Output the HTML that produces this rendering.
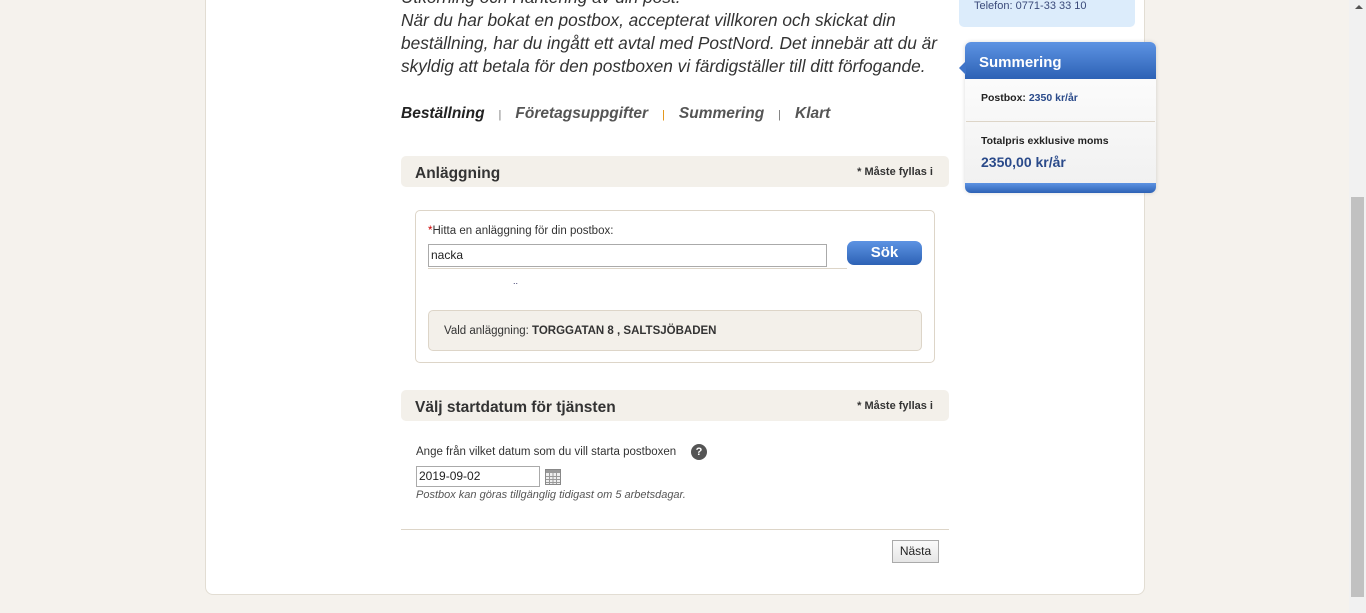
<!DOCTYPE html>
<html><head><meta charset="utf-8"><style>
*{box-sizing:border-box;margin:0;padding:0}
body{width:1366px;height:613px;overflow:hidden;background:#f5f2ed;font-family:"Liberation Sans",sans-serif;color:#333;position:relative}
.a{position:absolute}
.card{left:205px;top:-10px;width:940px;height:605px;background:#fff;border:1px solid #e2ddd3;border-radius:0 0 8px 8px}
.intro{left:401px;top:-14px;width:560px;font-style:italic;font-size:17.3px;line-height:23px;color:#333}
.tabs{left:401px;top:105px;font-style:italic;font-weight:bold;font-size:15.5px;color:#555;white-space:nowrap}
.tabs span.sep{font-style:normal;font-weight:normal;font-size:11px;color:#777;margin:0 14px}
.hdr{left:401px;width:548px;height:31px;background:#f3f0ea;border-radius:5px}
.hdr b{position:absolute;left:14px;top:9px;font-size:15.5px;color:#333}
.hdr i{position:absolute;right:16px;top:10px;font-size:11px;font-style:normal;font-weight:bold;color:#333}
.box{left:415px;top:210px;width:520px;height:153px;border:1px solid #ddd5c8;border-radius:5px}
.inp{border:1px solid #aaa;background:#fff;font-size:12px;padding-left:2px;color:#222}
.btn{left:847px;top:241px;width:75px;height:24px;border-radius:7px;background:linear-gradient(#5d93e3,#2d62b5);color:#fff;font-weight:bold;font-size:15px;text-align:center;line-height:23px}
.vald{left:428px;top:310px;width:494px;height:41px;background:#f3f0ea;border:1px solid #ddd5c8;border-radius:5px;font-size:11.5px;padding:14px 0 0 15px;color:#333}
.sm{font-size:11.5px}
</style></head><body>
<div class="a card"></div>
<div class="a intro">Utkörning och Hantering av din post.<br>När du har bokat en postbox, accepterat villkoren och skickat din beställning, har du ingått ett avtal med PostNord. Det innebär att du är skyldig att betala för den postboxen vi färdigställer till ditt förfogande.</div>
<div class="a tabs"><span style="color:#222">Beställning</span><span class="sep">|</span>Företagsuppgifter<span class="sep" style="color:#e08a00">|</span>Summering<span class="sep">|</span>Klart</div>

<div class="a hdr" style="top:156px"><b>Anläggning</b><i>* Måste fyllas i</i></div>
<div class="a box"></div>
<div class="a sm" style="left:428px;top:225px"><span style="color:#c00">*</span>Hitta en anläggning för din postbox:</div>
<div class="a inp" style="left:428px;top:244px;width:399px;height:23px;line-height:21px">nacka</div>
<div class="a" style="left:428px;top:268px;width:419px;height:1px;background:#ddd5c8"></div>
<div class="a" style="left:513px;top:276px;font-size:9px;color:#336">..</div>
<div class="a btn">Sök</div>
<div class="a vald">Vald anläggning: <b>TORGGATAN 8 , SALTSJÖBADEN</b></div>

<div class="a hdr" style="top:390px"><b>Välj startdatum för tjänsten</b><i>* Måste fyllas i</i></div>
<div class="a sm" style="left:416px;top:446px">Ange från vilket datum som du vill starta postboxen</div>
<div class="a" style="left:691px;top:444px;width:16px;height:16px;border-radius:50%;background:#555;color:#fff;font-size:11px;font-weight:bold;text-align:center;line-height:16px">?</div>
<div class="a inp" style="left:416px;top:466px;width:124px;height:21px;line-height:19px">2019-09-02</div>
<svg class="a" style="left:545px;top:469px" width="16" height="16" viewBox="0 0 16 16"><rect x="0.5" y="0.5" width="15" height="15" fill="#eee" stroke="#888"/><rect x="1" y="1" width="14" height="3" fill="#999"/><path d="M1 7.5h14M1 10.5h14M1 13.5h14M4.5 4v11M8 4v11M11.5 4v11" stroke="#999" stroke-width="1"/></svg>
<div class="a" style="left:416px;top:489px;font-size:11px;font-style:italic;color:#555">Postbox kan göras tillgänglig tidigast om 5 arbetsdagar.</div>
<div class="a" style="left:401px;top:529px;width:548px;height:1px;background:#ddd5c8"></div>
<div class="a" style="left:892px;top:540px;width:47px;height:23px;border:1px solid #aaa;background:linear-gradient(#fafafa,#e6e6e6);font-size:12px;text-align:center;line-height:21px;color:#222">Nästa</div>

<div class="a" style="left:959px;top:-6px;width:176px;height:33px;background:#dcecfb;border-radius:5px"></div>
<div class="a" style="left:974px;top:0px;font-size:11px;color:#3a4a7a">Telefon: 0771-33 33 10</div>

<div class="a" style="left:965px;top:42px;width:191px;height:151px;box-shadow:0 0 4px rgba(0,0,0,.15);border-radius:6px;background:linear-gradient(#fff,#f0f0f0)"></div>
<div class="a" style="left:965px;top:42px;width:191px;height:37px;border-radius:6px 6px 0 0;background:linear-gradient(#5d93e3,#2d62b5);color:#fff;font-weight:bold;font-size:15px;padding:12px 0 0 14px">Summering</div>
<div class="a" style="left:959px;top:61px;width:0;height:0;border-top:7px solid transparent;border-bottom:7px solid transparent;border-right:7px solid #3f74c8"></div>
<div class="a" style="left:981px;top:92px;font-size:10.5px;font-weight:bold;color:#222">Postbox: <span style="color:#2a4a8a">2350 kr/år</span></div>
<div class="a" style="left:966px;top:121px;width:189px;height:1px;background:#ddd5c8"></div>
<div class="a" style="left:981px;top:135px;font-size:10.5px;font-weight:bold;color:#222">Totalpris exklusive moms</div>
<div class="a" style="left:981px;top:154px;font-size:14px;font-weight:bold;color:#2a4a8a">2350,00 kr/år</div>
<div class="a" style="left:965px;top:183px;width:191px;height:10px;border-radius:0 0 6px 6px;background:linear-gradient(#5d93e3,#2d62b5)"></div>

<div class="a" style="left:1349px;top:0;width:17px;height:613px;background:#f1f1f1"></div>
<div class="a" style="left:1355px;top:5px;width:0;height:0;border-left:4px solid transparent;border-right:4px solid transparent;border-bottom:4px solid #555"></div>
<div class="a" style="left:1351px;top:197px;width:13px;height:400px;background:#c1c1c1"></div>
</body></html>
